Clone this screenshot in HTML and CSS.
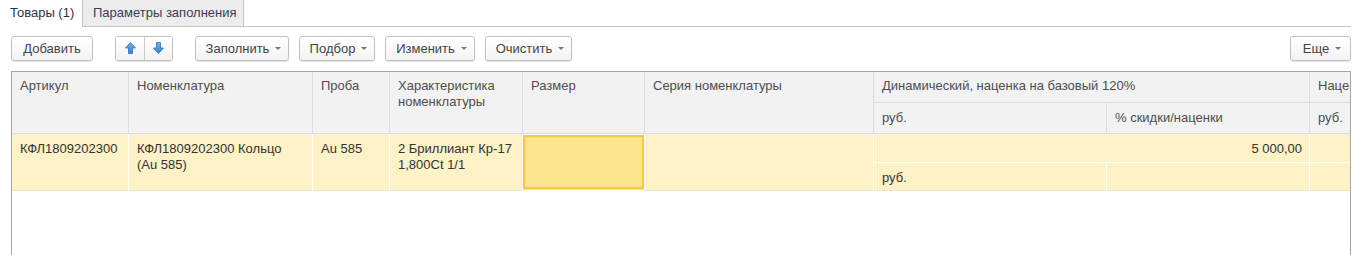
FILE: index.html
```html
<!DOCTYPE html>
<html lang="ru">
<head>
<meta charset="utf-8">
<title>Товары</title>
<link rel="stylesheet" href="styles.css">
</head>
<body>
<div class="tabs">
  <div class="tab active">Товары (1)</div>
  <div class="tab">Параметры заполнения</div>
  <div class="tab-rest"></div>
</div>

<div class="toolbar">
  <div class="btn add">Добавить</div>
  <div class="btn-group">
    <div class="btn icon">
      <svg width="11" height="12" viewBox="0 0 11 12"><defs><linearGradient id="ga" x1="0" y1="0" x2="0" y2="1"><stop offset="0" stop-color="#6fb3ee"/><stop offset="1" stop-color="#2f80d0"/></linearGradient></defs><path d="M5.5 0.5 L10.5 6 H7.5 V11.5 H3.5 V6 H0.5 Z" fill="url(#ga)" stroke="#2a74c2" stroke-width="0.8" stroke-linejoin="round"/></svg>
    </div>
    <div class="btn icon">
      <svg width="11" height="12" viewBox="0 0 11 12"><defs><linearGradient id="gb" x1="0" y1="0" x2="0" y2="1"><stop offset="0" stop-color="#6fb3ee"/><stop offset="1" stop-color="#2f80d0"/></linearGradient></defs><path d="M3.5 0.5 H7.5 V6 H10.5 L5.5 11.5 L0.5 6 H3.5 Z" fill="url(#gb)" stroke="#2a74c2" stroke-width="0.8" stroke-linejoin="round"/></svg>
    </div>
  </div>
  <div class="btn dd w-fill">Заполнить<span class="caret"></span></div>
  <div class="btn dd w-pick">Подбор<span class="caret"></span></div>
  <div class="btn dd w-edit">Изменить<span class="caret"></span></div>
  <div class="btn dd w-clear">Очистить<span class="caret"></span></div>
  <div class="spacer"></div>
  <div class="btn dd more">Еще<span class="caret"></span></div>
</div>

<div class="grid">
  <div class="h c1 span2">Артикул</div>
  <div class="h c2 span2">Номенклатура</div>
  <div class="h c3 span2">Проба</div>
  <div class="h c4 span2">Характеристика номенклатуры</div>
  <div class="h c5 span2">Размер</div>
  <div class="h c6 span2">Серия номенклатуры</div>
  <div class="h c78 r1">Динамический, наценка на базовый 120%</div>
  <div class="h c9 r1 last">Наценка</div>
  <div class="h c7 r2">руб.</div>
  <div class="h c8 r2">% скидки/наценки</div>
  <div class="h c9 r2 last">руб.</div>

  <div class="d c1 dspan">КФЛ1809202300</div>
  <div class="d c2 dspan">КФЛ1809202300 Кольцо (Au 585)</div>
  <div class="d c3 dspan">Au 585</div>
  <div class="d c4 dspan">2 Бриллиант Кр-17 1,800Ct 1/1</div>
  <div class="d c5 dspan sel"></div>
  <div class="d c6 dspan"></div>
  <div class="d c78 d1 num">5 000,00</div>
  <div class="d c9 d1 last"></div>
  <div class="d c7 d2">руб.</div>
  <div class="d c8 d2"></div>
  <div class="d c9 d2 last"></div>
</div>
</body>
</html>
```

FILE: styles.css
```css
* { box-sizing: border-box; }
html, body { margin: 0; padding: 0; background: #fff; }
body {
  font-family: "Liberation Sans", Arial, sans-serif;
  font-size: 13px;
  color: #4d4d4d;
  width: 1361px;
  height: 255px;
  overflow: hidden;
}

/* Tabs */
.tabs {
  display: flex;
  height: 27px;
  padding-right: 10px;
}
.tab {
  height: 27px;
  line-height: 26px;
  padding: 0 10px;
  white-space: nowrap;
  color: #333;
}
.tab.active {
  width: 82px;
  background: #fff;
}
.tab:not(.active) {
  width: 162px;
  background: #ececec;
  border: 1px solid #c4c4c4;
  border-top: none;
  color: #3b3b55;
  padding-left: 10px;
}
.tab-rest {
  flex: 1;
  border-bottom: 1px solid #c4c4c4;
}

/* Toolbar */
.toolbar {
  display: flex;
  align-items: center;
  padding: 8px 10px 0 11px;
  height: 34px;
  gap: 10px;
}
.btn {
  height: 25px;
  line-height: 23px;
  border: 1px solid #c2c2c2;
  border-radius: 3px;
  background: linear-gradient(#ffffff, #f3f3f3);
  box-shadow: 0 1px 1px rgba(0,0,0,0.12);
  padding: 0;
  color: #444;
  white-space: nowrap;
  display: flex;
  align-items: center;
  justify-content: center;
}
.btn.add { width: 82px; margin-right: 12px; }
.btn-group {
  display: flex;
  width: 58px;
  margin-right: 12px;
  border: 1px solid #c2c2c2;
  border-radius: 3px;
  box-shadow: 0 1px 1px rgba(0,0,0,0.12);
  overflow: hidden;
}
.btn-group .btn.icon {
  border: none;
  border-radius: 0;
  box-shadow: none;
  height: 23px;
  width: 29px;
}
.btn-group .btn.icon + .btn.icon { border-left: 1px solid #c8c8c8; width: 28px; }
.btn.dd { padding-left: 3px; }
.w-fill { width: 94px; }
.w-pick { width: 76px; }
.w-edit { width: 90px; }
.w-clear { width: 87px; }
.caret {
  display: inline-block;
  width: 0; height: 0;
  border-left: 3px solid transparent;
  border-right: 3px solid transparent;
  border-top: 3px solid #777;
  margin-left: 6px;
  margin-top: 1px;
}
.spacer { flex: 1; }
.btn.more { width: 61px; }

/* Grid table */
.grid {
  margin: 10px 0 0 11px;
  width: 1340px;
  height: 185px;
  border: 1px solid #a5a5a5;
  border-bottom: none;
  display: grid;
  grid-template-columns: 117px 184px 77px 133px 122px 229px 233px 203px 40px;
  grid-template-rows: 31px 31px 29px 28px;
  align-content: start;
  overflow: hidden;
}
.h {
  background: #f2f2f2;
  border-right: 1px solid #dcdcdc;
  border-bottom: 1px solid #dcdcdc;
  padding: 6px 8px 0 8px;
  line-height: 16px;
  color: #4d4d4d;
  overflow: hidden;
  white-space: nowrap;
}
.h.c4 { white-space: normal; }
.h.last, .d.last { border-right: none; }
.h.last { padding-right: 0; text-overflow: clip; }
.c1 { grid-column: 1; }
.c2 { grid-column: 2; }
.c3 { grid-column: 3; }
.c4 { grid-column: 4; }
.c5 { grid-column: 5; }
.c6 { grid-column: 6; }
.c7 { grid-column: 7; }
.c8 { grid-column: 8; }
.c9 { grid-column: 9; }
.c78 { grid-column: 7 / span 2; }
.span2 { grid-row: 1 / span 2; }
.r1 { grid-row: 1; }
.r2 { grid-row: 2; padding-top: 7px; }
.dspan { grid-row: 3 / span 2; }
.d1 { grid-row: 3; }
.d2 { grid-row: 4; padding-top: 6px; }
.d {
  background: #fdf1c6;
  border-right: 1px solid #fff;
  border-bottom: 1px solid #fff;
  padding: 7px 8px 0 8px;
  line-height: 16px;
  color: #333;
}
.dspan, .d2 { border-bottom: 1px solid #e0e0e0; }
.d.num { text-align: right; padding-right: 7px; }
.d.sel {
  background: #fde48f;
  box-shadow: inset 0 0 0 2px #fcca2b;
  margin: 1px 0 1px 0;
}
```
